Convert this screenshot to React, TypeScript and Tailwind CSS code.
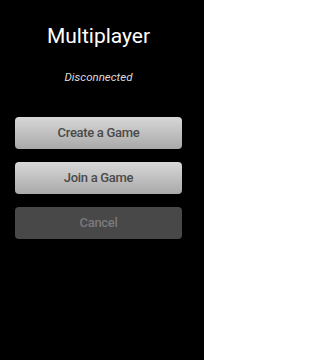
export default function App() {
  return (
    <div className="w-[204px] h-[360px] pr-[7px] bg-black flex flex-col items-center font-['Roboto',sans-serif]">
      <h1 className="mt-[24px] text-[21px] leading-[24px] text-white">Multiplayer</h1>
      <p className="mt-[22px] text-[11.5px] leading-[14px] italic text-[#dddddd]">Disconnected</p>
      <div className="mt-[33px] w-[167px] flex flex-col gap-[13px]">
        <button className="h-[32px] rounded-[4px] bg-gradient-to-b from-[#d8d8d8] to-[#a9a9a9] text-[13px] tracking-[-0.3px] font-medium text-[#4a4a4a]">
          Create a Game
        </button>
        <button className="h-[32px] rounded-[4px] bg-gradient-to-b from-[#d8d8d8] to-[#a9a9a9] text-[13px] tracking-[-0.3px] font-medium text-[#4a4a4a]">
          Join a Game
        </button>
        <button className="h-[32px] rounded-[4px] bg-[#484848] text-[13px] tracking-[-0.3px] font-medium text-[#7a7a7a]">
          Cancel
        </button>
      </div>
    </div>
  )
}
